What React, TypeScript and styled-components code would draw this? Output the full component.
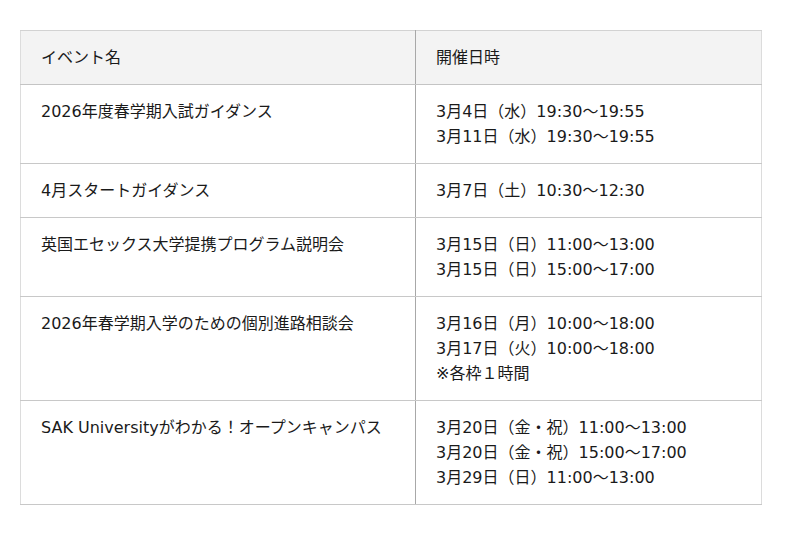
import styled, { createGlobalStyle } from 'styled-components';

const GlobalStyle = createGlobalStyle`
    body {
        margin: 0;
        background: #fff;
        font-family: "DejaVu Sans", "Noto Sans CJK JP", sans-serif;
        color: #1a1a1a;
    }
`;

const Page = styled.div`
    padding: 30px 20px;
`;

const Table = styled.table`
    width: 742px;
    border-collapse: collapse;
    table-layout: fixed;
    font-size: 16px;
    line-height: 25px;
    border: 1px solid #dcdcdc;
`;

const HeadCell = styled.th`
    background: #f3f3f3;
    font-weight: normal;
    text-align: left;
    padding: 14px 20px;
    border-top: 1px solid #d2d2d2;
    border-bottom: 1px solid #c4c4c4;
    &:first-child {
        border-right: 1px solid #a8a8a8;
    }
`;

const Cell = styled.td`
    vertical-align: top;
    padding: 14px 20px;
    border-bottom: 1px solid #c8c8c8;
    &:first-child {
        border-right: 1px solid #a8a8a8;
    }
`;

const Line = styled.div`
    white-space: nowrap;
`;

type Event = {
    name: string
    dates: string[]
};

const events: Event[] = [
    { name: '2026年度春学期入試ガイダンス', dates: ['3月4日（水）19:30〜19:55', '3月11日（水）19:30〜19:55'] },
    { name: '4月スタートガイダンス', dates: ['3月7日（土）10:30〜12:30'] },
    { name: '英国エセックス大学提携プログラム説明会', dates: ['3月15日（日）11:00〜13:00', '3月15日（日）15:00〜17:00'] },
    { name: '2026年春学期入学のための個別進路相談会', dates: ['3月16日（月）10:00〜18:00', '3月17日（火）10:00〜18:00', '※各枠１時間'] },
    {
        name: 'SAK Universityがわかる！オープンキャンパス',
        dates: ['3月20日（金・祝）11:00〜13:00', '3月20日（金・祝）15:00〜17:00', '3月29日（日）11:00〜13:00']
    }
];

const App = () => <>
    <GlobalStyle/>
    <Page>
        <Table>
            <colgroup>
                <col style={{ width: 395 }}/>
                <col/>
            </colgroup>
            <thead>
                <tr>
                    <HeadCell>イベント名</HeadCell>
                    <HeadCell>開催日時</HeadCell>
                </tr>
            </thead>
            <tbody>
                {events.map(ev => <tr key={ev.name}>
                    <Cell>{ev.name}</Cell>
                    <Cell>{ev.dates.map(d => <Line key={d}>{d}</Line>)}</Cell>
                </tr>)}
            </tbody>
        </Table>
    </Page>
</>;

export default App;
